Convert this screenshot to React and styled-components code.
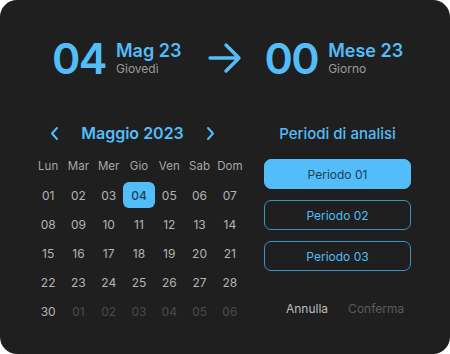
import React, { useState } from "react";
import styled, { createGlobalStyle } from "styled-components";

const GlobalStyle = createGlobalStyle`
    body {
        margin: 0;
        background: #ffffff;
        font-family: Inter, "Noto Sans", sans-serif;
    }
`;

const BLUE = "#52bdf8";

const weekDays = ["Lun", "Mar", "Mer", "Gio", "Ven", "Sab", "Dom"];

// the month grid as it appears in the design (29 is not listed)
const days = [];
for (let i = 1; i <= 28; i++) days.push({ n: i, muted: false });
days.push({ n: 30, muted: false });
for (let i = 1; i <= 6; i++) days.push({ n: i, muted: true });

const pad = (n) => String(n).padStart(2, "0");

function ArrowRight() {
    return (
        <svg width="34" height="32" viewBox="0 0 34 32" fill="none">
            <path
                d="M2 16H31M18 3L31 16L18 29"
                stroke={BLUE}
                strokeWidth="3.4"
                strokeLinecap="round"
                strokeLinejoin="round"
            />
        </svg>
    );
}

function Chevron({ dir }) {
    const d = dir === "left" ? "M8 2L3 7.5L8 13" : "M3 2L8 7.5L3 13";
    return (
        <svg width="11" height="15" viewBox="0 0 11 15" fill="none">
            <path d={d} stroke={BLUE} strokeWidth="2" strokeLinecap="round" strokeLinejoin="round" />
        </svg>
    );
}

function DateBlock({ big, title, sub }) {
    return (
        <DateGroup>
            <BigNumber>{big}</BigNumber>
            <DateText>
                <h3>{title}</h3>
                <p>{sub}</p>
            </DateText>
        </DateGroup>
    );
}

export default function App() {
    const [selected, setSelected] = useState(4);
    const [period, setPeriod] = useState(1);
    return (
        <>
            <GlobalStyle />
            <Card>
                <Header>
                    <DateBlock big="04" title="Mag 23" sub="Giovedì" />
                    <ArrowWrap>
                        <ArrowRight />
                    </ArrowWrap>
                    <DateBlock big="00" title="Mese 23" sub="Giorno" />
                </Header>
                <Body>
                    <Calendar>
                        <MonthNav>
                            <NavButton><Chevron dir="left" /></NavButton>
                            <MonthTitle>Maggio 2023</MonthTitle>
                            <NavButton><Chevron dir="right" /></NavButton>
                        </MonthNav>
                        <Grid>
                            {weekDays.map((w) => (
                                <WeekDay key={w}>{w}</WeekDay>
                            ))}
                            {days.map((d, i) => (
                                <Day
                                    key={i}
                                    $muted={d.muted}
                                    $active={!d.muted && d.n === selected}
                                    onClick={() => !d.muted && setSelected(d.n)}
                                >
                                    {pad(d.n)}
                                </Day>
                            ))}
                        </Grid>
                    </Calendar>
                    <Side>
                        <SideTitle>Periodi di analisi</SideTitle>
                        <Periods>
                            {[1, 2, 3].map((p) => (
                                <PeriodButton
                                    key={p}
                                    $active={period === p}
                                    onClick={() => setPeriod(p)}
                                >
                                    Periodo {pad(p)}
                                </PeriodButton>
                            ))}
                        </Periods>
                        <Actions>
                            <ActionButton>Annulla</ActionButton>
                            <ActionButton $disabled>Conferma</ActionButton>
                        </Actions>
                    </Side>
                </Body>
            </Card>
        </>
    );
}

const Card = styled.div`
    width: 450px;
    height: 354px;
    box-sizing: border-box;
    background: #1f1f1f;
    border-radius: 17px;
    padding-top: 36px;
    display: flex;
    flex-direction: column;
`;

const Header = styled.div`
    display: flex;
    align-items: center;
    padding-left: 52px;
    height: 44px;
`;

const DateGroup = styled.div`
    display: flex;
    align-items: center;
    gap: 10px;
`;

const BigNumber = styled.div`
    font-size: 43px;
    font-weight: 600;
    line-height: 44px;
    color: ${BLUE};
    letter-spacing: -1.5px;
`;

const DateText = styled.div`
    display: flex;
    flex-direction: column;
    margin-top: 2px;
    h3 {
        margin: 0;
        font-size: 18px;
        line-height: 20px;
        font-weight: 600;
        color: ${BLUE};
    }
    p {
        margin: 0;
        font-size: 12px;
        line-height: 16px;
        color: #9b9b9b;
    }
`;

const ArrowWrap = styled.div`
    display: flex;
    margin: 0 22px 0 27px;
`;

const Body = styled.div`
    display: flex;
    gap: 19px;
    padding-left: 33px;
    margin-top: 41px;
`;

const Calendar = styled.div`
    width: 212px;
    display: flex;
    flex-direction: column;
    gap: 8px;
`;

const MonthNav = styled.div`
    display: flex;
    align-items: center;
    justify-content: space-between;
    height: 24px;
    padding: 0 29px 0 16px;
`;

const NavButton = styled.div`
    display: flex;
    align-items: center;
    cursor: pointer;
`;

const MonthTitle = styled.div`
    font-size: 16px;
    font-weight: 600;
    color: ${BLUE};
`;

const Grid = styled.div`
    display: grid;
    grid-template-columns: repeat(7, minmax(0, 1fr));
    grid-auto-rows: 26px;
    row-gap: 3px;
`;

const WeekDay = styled.div`
    display: flex;
    align-items: center;
    justify-content: center;
    font-size: 11.5px;
    color: #a8a8a8;
`;

const Day = styled.div`
    display: flex;
    align-items: center;
    justify-content: center;
    justify-self: center;
    width: 32px;
    font-size: 12px;
    border-radius: 6px;
    cursor: pointer;
    color: ${(p) => (p.$active ? "#1e3d52" : p.$muted ? "#4b4b4b" : "#b4b4b4")};
    background: ${(p) => (p.$active ? BLUE : "transparent")};
    font-weight: ${(p) => (p.$active ? 500 : 400)};
`;

const Side = styled.div`
    width: 147px;
    display: flex;
    flex-direction: column;
`;

const SideTitle = styled.div`
    height: 24px;
    display: flex;
    align-items: center;
    justify-content: center;
    font-size: 15px;
    font-weight: 500;
    color: ${BLUE};
`;

const Periods = styled.div`
    display: flex;
    flex-direction: column;
    gap: 11px;
    margin-top: 14px;
`;

const PeriodButton = styled.div`
    height: 30px;
    box-sizing: border-box;
    border-radius: 7px;
    display: flex;
    align-items: center;
    justify-content: center;
    font-size: 12px;
    cursor: pointer;
    border: 1px solid ${(p) => (p.$active ? BLUE : "#3d94c4")};
    background: ${(p) => (p.$active ? BLUE : "transparent")};
    color: ${(p) => (p.$active ? "#1e3d52" : BLUE)};
`;

const Actions = styled.div`
    display: flex;
    gap: 20px;
    padding-left: 22px;
    margin-top: 30px;
`;

const ActionButton = styled.div`
    font-size: 12px;
    cursor: pointer;
    color: ${(p) => (p.$disabled ? "#5c5c5c" : "#bdbdbd")};
`;
